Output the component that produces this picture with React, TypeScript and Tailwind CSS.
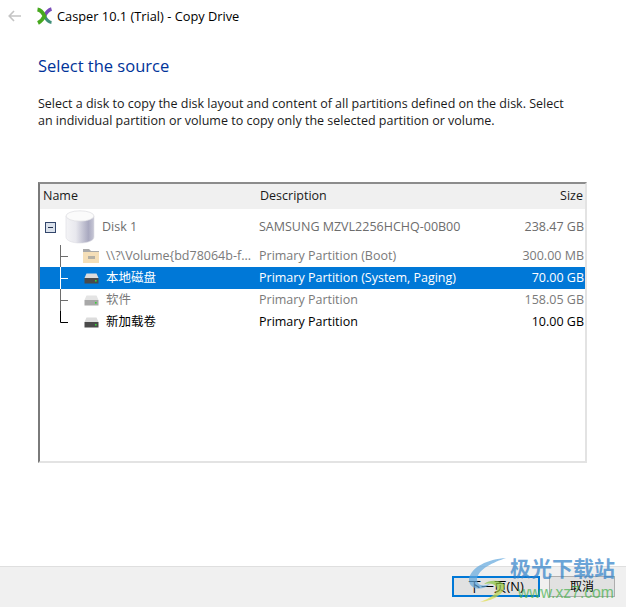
import React from 'react';

const FONT = "font-['Open_Sans','Noto_Sans_CJK_SC',sans-serif]";

const rows = [
  { name: '\\\\?\\Volume{bd78064b-f...', desc: 'Primary Partition (Boot)', size: '300.00 MB', kind: 'muted', icon: 'folder' },
  { name: '本地磁盘', desc: 'Primary Partition (System, Paging)', size: '70.00 GB', kind: 'selected', icon: 'drive' },
  { name: '软件', desc: 'Primary Partition', size: '158.05 GB', kind: 'muted', icon: 'driveMuted' },
  { name: '新加载卷', desc: 'Primary Partition', size: '10.00 GB', kind: 'normal', icon: 'drive', last: true },
];

const CasperLogo = () => (
  <svg width="17" height="18" viewBox="0 0 17 18" className="shrink-0">
    <path d="M15.5 2 C12 3 10 6 8.5 9" stroke="#7a4db8" strokeWidth="3.4" fill="none" />
    <path d="M8.5 9 C10 12 12 15 15.5 15.5" stroke="#3f8f78" strokeWidth="3" fill="none" />
    <path d="M1.5 2.5 C5 3 7 6 8.5 9 C7 12 5 14.5 2 16" stroke="#47a81f" strokeWidth="3.8" fill="none" />
  </svg>
);

const DiskIcon = () => (
  <svg width="30" height="34" viewBox="0 0 30 34" className="shrink-0">
    <defs>
      <linearGradient id="cyl" x1="0" x2="1" y1="0" y2="0">
        <stop offset="0" stopColor="#f4f4f6" />
        <stop offset="0.35" stopColor="#e8e8ee" />
        <stop offset="0.8" stopColor="#a9a9c0" />
        <stop offset="1" stopColor="#c8c8d6" />
      </linearGradient>
    </defs>
    <path d="M1 6 V27 C1 30.5 7 33 15 33 C23 33 29 30.5 29 27 V6 Z" fill="url(#cyl)" stroke="#dcdce2" strokeWidth="0.6" />
    <ellipse cx="15" cy="6" rx="14" ry="5.2" fill="#fbfbfb" stroke="#d6d6dc" strokeWidth="0.6" />
  </svg>
);

const FolderIcon = () => (
  <svg width="17" height="16" viewBox="0 0 17 16" className="shrink-0">
    <path d="M0 1 H6 L8 3 H16 V5 H0 Z" fill="#a9a9a9" />
    <path d="M0 4 H16 V15 H0 Z" fill="#f5dfb8" />
    <rect x="5" y="8" width="7" height="3" fill="#b5b0a4" />
  </svg>
);

const DriveIcon = ({ muted }: { muted?: boolean }) => (
  <svg width="15" height="11" viewBox="0 0 15 11" className="shrink-0">
    <path d="M2.5 0.5 H12.5 L14.5 5 H0.5 Z" fill={muted ? '#e4e4e4' : '#dcdcdc'} />
    <rect x="0.5" y="5" width="14" height="5.5" fill={muted ? '#a8a8a8' : '#4a4a4a'} />
    <rect x="11" y="7" width="1.6" height="1.6" fill="#35d435" />
  </svg>
);

const Connector = ({ color, last }: { color: string; last?: boolean }) => (
  <svg width="10" height="22" viewBox="0 0 10 22" className="shrink-0">
    <path d={last ? 'M0.5 0 V11.5 H8' : 'M0.5 0 V22 M0.5 11.5 H8'} stroke={color} fill="none" />
  </svg>
);

const Watermark = () => (
  <div className="absolute right-[10px] bottom-[6px] w-[160px] h-[50px] pointer-events-none opacity-70">
    <svg width="38" height="46" viewBox="0 0 38 46" className="absolute left-[12px] top-[6px]">
      <defs>
        <linearGradient id="swoosh" x1="0" x2="0" y1="0" y2="1">
          <stop offset="0" stopColor="#7fc241" />
          <stop offset="1" stopColor="#e8e04a" />
        </linearGradient>
      </defs>
      <path d="M1 22 C3 10 20 2 38 1 C26 5 10 12 9 22 C9 28 14 30 22 27 C14 35 0 32 1 22 Z" fill="#62a8de" />
      <path d="M16 27 C22 22 33 23 37 28 C36 38 24 44 12 45 C24 41 32 34 28 29 C25 26 20 26 16 27 Z" fill="url(#swoosh)" />
    </svg>
    <span className={`absolute left-[54px] top-[4px] text-[21px] leading-[26px] font-bold whitespace-nowrap text-[#2f80c8] ${FONT}`}>极光下载站</span>
    <span className="absolute left-[62px] top-[33px] text-[15.7px] leading-[18px] whitespace-nowrap text-[#45b04a] font-['Liberation_Sans',sans-serif]">www.xz7.com</span>
  </div>
);

export default function App() {
  return (
    <div className={`relative w-[626px] h-[607px] bg-white flex flex-col text-[12.5px] text-black overflow-hidden ${FONT}`}>
      <div className="flex items-center h-[31px] pl-[8px] pt-[1px]">
        <svg width="13" height="12" viewBox="0 0 13 12" className="shrink-0">
          <path d="M6 1 L1.2 6 L6 11 M1.2 6 H13" stroke="#c4c4c4" strokeWidth="1.6" fill="none" />
        </svg>
        <div className="ml-[15px]"><CasperLogo /></div>
        <span className="ml-[4px] text-[12.8px] leading-[16px]">Casper 10.1 (Trial) - Copy Drive</span>
      </div>

      <div className="flex flex-col pl-[38px] pr-[39px] flex-1">
        <h1 className="mt-[23px] text-[16.5px] leading-[24px] text-[#003399] font-normal">Select the source</h1>
        <p className="mt-[17px] text-[12.5px] leading-[17px] text-[#1a1a1a]">
          Select a disk to copy the disk layout and content of all partitions defined on the disk. Select
          <br />
          an individual partition or volume to copy only the selected partition or volume.
        </p>

        <div className="mt-[53px] h-[281px] border-t-2 border-l-2 border-r-2 border-b-2 border-t-[#8c8c8c] border-l-[#7a7a7a] border-r-[#e3e3e3] border-b-[#e3e3e3] flex flex-col">
          <div className="flex items-center h-[25px] bg-[#f0f0f0] shrink-0">
            <span className="w-[219px] pl-[3px] text-[#1a1a1a]">Name</span>
            <span className="flex-1 pl-[1px] text-[#1a1a1a]">Description</span>
            <span className="pr-[2px] text-[#1a1a1a]">Size</span>
          </div>

          <div className="flex items-center h-[36px] shrink-0 text-[#6d6d6d]">
            <div className="flex items-center w-[219px]">
              <div className="ml-[5px] w-[11px] h-[11px] border border-[#33466b] bg-[#dbe2ec] flex items-center justify-center">
                <div className="w-[5px] h-[1px] bg-[#22304d]" />
              </div>
              <div className="ml-[9px]"><DiskIcon /></div>
              <span className="ml-[7px]">Disk 1</span>
            </div>
            <span className="flex-1">SAMSUNG MZVL2256HCHQ-00B00</span>
            <span className="pr-[1px]">238.47 GB</span>
          </div>

          {rows.map((row) => {
            const selected = row.kind === 'selected';
            const muted = row.kind === 'muted';
            const line = selected ? '#ffffff' : muted ? '#6d6d6d' : '#000000';
            return (
              <div
                key={row.name}
                className={`flex items-center h-[22px] shrink-0 ${selected ? 'bg-[#0078d7] text-white' : muted ? 'text-[#7a7a7a]' : 'text-black'}`}
              >
                <div className="flex items-center w-[219px]">
                  <div className="ml-[20px]"><Connector color={line} last={row.last} /></div>
                  <div className="w-[17px] ml-[13px] flex justify-center">
                    {row.icon === 'folder' ? <FolderIcon /> : <DriveIcon muted={row.icon === 'driveMuted'} />}
                  </div>
                  <span className="ml-[6px] whitespace-nowrap">{row.name}</span>
                </div>
                <span className="flex-1">{row.desc}</span>
                <span className="pr-[1px]">{row.size}</span>
              </div>
            );
          })}
        </div>
      </div>

      <div className="flex justify-end items-start gap-[9px] h-[41px] bg-[#f0f0f0] border-t border-[#dfdfdf] pt-[9px] pr-[11px] shrink-0">
        <button className="w-[88px] h-[21px] border-2 border-[#0078d7] bg-[#e1e1e1] text-[12.8px] leading-none">下一页(N)</button>
        <button className="w-[66px] h-[21px] border border-[#adadad] bg-[#e1e1e1] text-[12px] leading-none">取消</button>
      </div>

      <Watermark />
    </div>
  );
}
